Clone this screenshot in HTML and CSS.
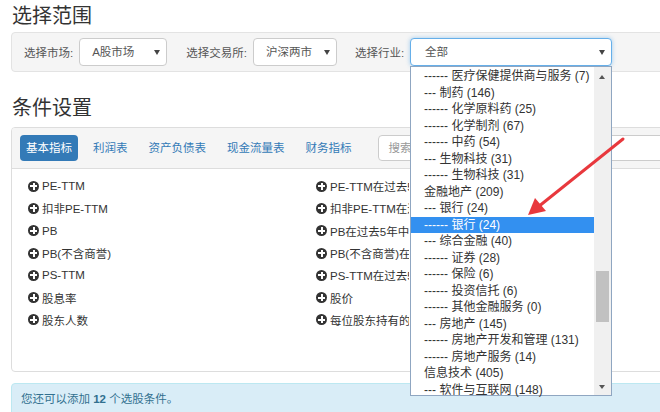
FILE: index.html
```html
<!DOCTYPE html>
<html>
<head>
    <meta charset="utf-8">
    <title>选股 - 条件设置</title>
    <link rel="stylesheet" href="styles.css">
</head>
<body>
<div class="page">
    <h2 class="section-title">选择范围</h2>
    <div class="well">
        <label class="field-label">选择市场:</label>
        <div class="fake-select market">A股市场<span class="caret"></span></div>
        <label class="field-label">选择交易所:</label>
        <div class="fake-select exchange">沪深两市<span class="caret"></span></div>
        <label class="field-label">选择行业:</label>
        <div class="select-wrap">
            <div class="fake-select industry focused">全部<span class="caret"></span></div>
            <!-- opened option list -->
            <div class="option-list">
                <div class="options">
                    <div class="opt">------ 医疗保健提供商与服务 (7)</div>
                    <div class="opt">--- 制药 (146)</div>
                    <div class="opt">------ 化学原料药 (25)</div>
                    <div class="opt">------ 化学制剂 (67)</div>
                    <div class="opt">------ 中药 (54)</div>
                    <div class="opt">--- 生物科技 (31)</div>
                    <div class="opt">------ 生物科技 (31)</div>
                    <div class="opt">金融地产 (209)</div>
                    <div class="opt">--- 银行 (24)</div>
                    <div class="opt selected">------ 银行 (24)</div>
                    <div class="opt">--- 综合金融 (40)</div>
                    <div class="opt">------ 证券 (28)</div>
                    <div class="opt">------ 保险 (6)</div>
                    <div class="opt">------ 投资信托 (6)</div>
                    <div class="opt">------ 其他金融服务 (0)</div>
                    <div class="opt">--- 房地产 (145)</div>
                    <div class="opt">------ 房地产开发和管理 (131)</div>
                    <div class="opt">------ 房地产服务 (14)</div>
                    <div class="opt">信息技术 (405)</div>
                    <div class="opt">--- 软件与互联网 (148)</div>
                </div>
                <div class="scrollbar">
                    <span class="arrow-up"></span>
                    <span class="thumb"></span>
                    <span class="arrow-down"></span>
                </div>
            </div>
        </div>
    </div>

    <h2 class="section-title second">条件设置</h2>
    <div class="panel">
        <div class="panel-heading">
            <a class="tab active">基本指标</a>
            <a class="tab">利润表</a>
            <a class="tab">资产负债表</a>
            <a class="tab">现金流量表</a>
            <a class="tab">财务指标</a>
            <div class="search-box"><span class="placeholder">搜索</span></div>
        </div>
        <div class="panel-body">
            <div class="cond"><span class="plus"></span>PE-TTM</div>
            <div class="cond"><span class="plus"></span>PE-TTM在过去5年中的分位点</div>
            <div class="cond"><span class="plus"></span>扣非PE-TTM</div>
            <div class="cond"><span class="plus"></span>扣非PE-TTM在过去5年中的分位点</div>
            <div class="cond"><span class="plus"></span>PB</div>
            <div class="cond"><span class="plus"></span>PB在过去5年中的分位点</div>
            <div class="cond"><span class="plus"></span>PB(不含商誉)</div>
            <div class="cond"><span class="plus"></span>PB(不含商誉)在过去5年中的分位点</div>
            <div class="cond"><span class="plus"></span>PS-TTM</div>
            <div class="cond"><span class="plus"></span>PS-TTM在过去5年中的分位点</div>
            <div class="cond"><span class="plus"></span>股息率</div>
            <div class="cond"><span class="plus"></span>股价</div>
            <div class="cond"><span class="plus"></span>股东人数</div>
            <div class="cond"><span class="plus"></span>每位股东持有的市值</div>
        </div>
    </div>

    <div class="alert-info">您还可以添加 <b>12</b> 个选股条件。</div>
</div>

<!-- red annotation arrow -->
<svg class="annotation" width="660" height="412" viewBox="0 0 660 412">
    <line x1="623" y1="139" x2="538" y2="207" stroke="#e8383d" stroke-width="3" stroke-linecap="round"/>
    <polygon points="528,215 535,198 546,211" fill="#e8383d"/>
</svg>
</body>
</html>
```

FILE: styles.css
```css
html, body {
    margin: 0;
    padding: 0;
    overflow: hidden;
}

body {
    background-color: white;
    font-family: "Liberation Sans", "Noto Sans CJK SC", sans-serif;
    font-size: 11.5px;
    color: #333;
}

.page {
    width: 900px;
    padding-left: 11px;
}

.section-title {
    margin: 0;
    font-size: 20px;
    font-weight: 400;
    line-height: 32px;
    padding-left: 1px;
    color: #333;
}

.section-title.second {
    margin-top: 20px;
    margin-bottom: 3px;
}

.well {
    display: flex;
    align-items: center;
    height: 38px;
    padding: 0 12px;
    background-color: #f5f5f5;
    border: 1px solid #e3e3e3;
    border-radius: 4px;
}

.field-label {
    color: #555;
    margin-right: 6px;
}

.fake-select {
    position: relative;
    box-sizing: border-box;
    height: 28px;
    line-height: 26px;
    padding-left: 12px;
    margin-right: 19px;
    background-color: white;
    border: 1px solid #ccc;
    border-radius: 4px;
    color: #555;
}

.fake-select.market { width: 88px; }
.fake-select.exchange { width: 84px; margin-right: 18px; }
.fake-select.industry { width: 202px; padding-left: 14px; margin-right: 0; }

.fake-select.focused {
    border-color: #66afe9;
    box-shadow: 0 0 4px rgba(102, 175, 233, 0.6);
}

.caret {
    position: absolute;
    right: 6px;
    top: 11px;
    width: 0;
    height: 0;
    border-left: 3px solid transparent;
    border-right: 3px solid transparent;
    border-top: 5px solid #444;
}

.select-wrap {
    position: relative;
}

.option-list {
    position: absolute;
    left: 0;
    top: 28px;
    z-index: 5;
    width: 202px;
    height: 330px;
    box-sizing: border-box;
    display: flex;
    background-color: white;
    border: 1px solid #8fa6c1;
}

.options {
    flex: 1;
    padding-top: 1px;
    font-size: 12px;
}

.opt {
    height: 16.5px;
    line-height: 16.5px;
    padding-left: 13px;
    white-space: nowrap;
    color: #333;
}

.opt.selected {
    background-color: #3390f0;
    color: white;
}

.scrollbar {
    position: relative;
    width: 17px;
    background-color: #f0f0f0;
}

.arrow-up,
.arrow-down {
    position: absolute;
    left: 5px;
    width: 0;
    height: 0;
    border-left: 3.5px solid transparent;
    border-right: 3.5px solid transparent;
}

.arrow-up {
    top: 8px;
    border-bottom: 4px solid #555;
}

.arrow-down {
    bottom: 6px;
    border-top: 4px solid #555;
}

.thumb {
    position: absolute;
    left: 2px;
    right: 2px;
    top: 204px;
    height: 51px;
    background-color: #c1c1c1;
}

.panel {
    border: 1px solid #ddd;
    border-radius: 4px;
    height: 243px;
    overflow: hidden;
}

.panel-heading {
    display: flex;
    align-items: center;
    height: 40px;
    padding: 0 8px;
    background-color: #f5f5f5;
    border-bottom: 1px solid #ddd;
}

.tab {
    padding: 0 6px;
    margin-right: 9px;
    line-height: 26px;
    color: #337ab7;
    border-radius: 4px;
    cursor: pointer;
}

.tab.active {
    background-color: #337ab7;
    color: white;
}

.search-box {
    margin-left: 11px;
    box-sizing: border-box;
    width: 300px;
    height: 26px;
    line-height: 24px;
    padding-left: 10px;
    background-color: white;
    border: 1px solid #ccc;
    border-radius: 4px;
    color: #999;
}

.panel-body {
    display: grid;
    grid-template-columns: 288px 93px;
    padding: 6px 0 0 16px;
}

.cond {
    display: flex;
    align-items: center;
    height: 22.3px;
    white-space: nowrap;
    overflow: hidden;
}

.plus {
    position: relative;
    flex: none;
    width: 11px;
    height: 11px;
    margin-right: 3px;
    border-radius: 50%;
    background-color: #333;
}

.plus::before,
.plus::after {
    content: "";
    position: absolute;
    background-color: white;
}

.plus::before {
    left: 2px;
    right: 2px;
    top: 4.5px;
    height: 2px;
}

.plus::after {
    top: 2px;
    bottom: 2px;
    left: 4.5px;
    width: 2px;
}

.alert-info {
    margin-top: 11px;
    padding: 7px 9px 10px;
    line-height: 16px;
    background-color: #d9edf7;
    border: 1px solid #bce8f1;
    border-radius: 4px;
    color: #31708f;
}

.annotation {
    position: absolute;
    left: 0;
    top: 0;
    z-index: 10;
    pointer-events: none;
}
```
